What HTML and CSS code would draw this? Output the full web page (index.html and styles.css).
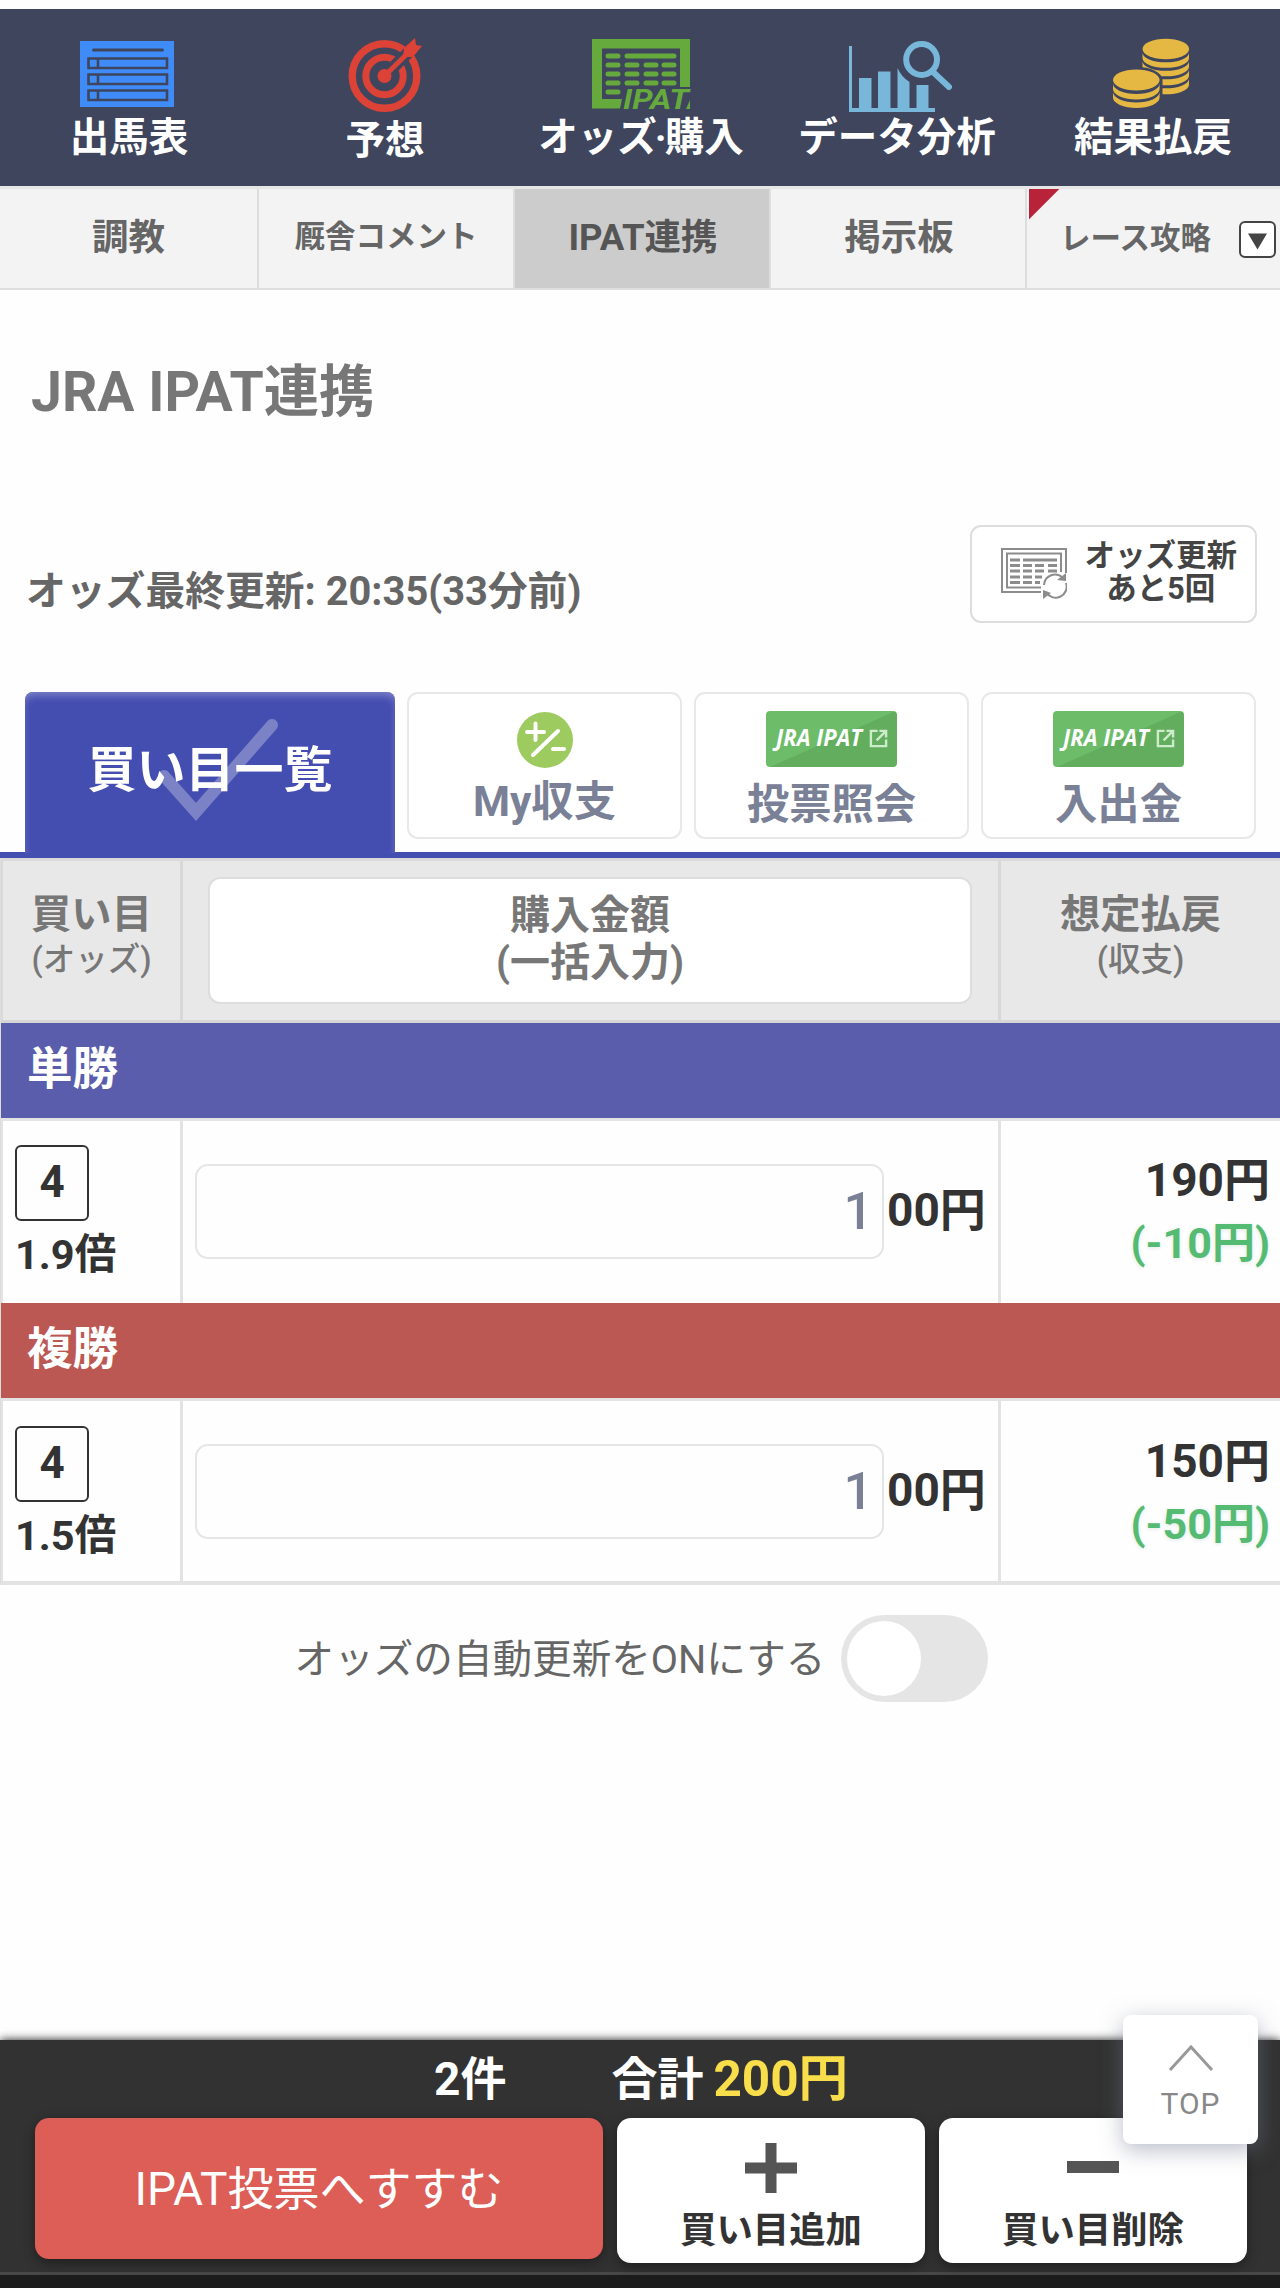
FILE: index.html
```html
<!DOCTYPE html>
<html lang="ja">
<head>
  <meta charset="utf-8">
  <title>JRA IPAT連携</title>
  <link rel="stylesheet" href="styles.css">
</head>
<body>
  <div class="page">
    <nav class="main-nav">
      <a class="main-nav-item">
        <svg class="nav-icon" viewBox="0 0 104 78">
          <rect x="4" y="5" width="94" height="66" fill="#3f8cf8"/>
          <g fill="none" stroke="#3e455d" stroke-width="2.6">
            <path d="M17.500 14H86.500" stroke-width="3" stroke-linecap="round"/>
            <path d="M12.500 22.500h78.500v9.500h-78.500zM22 22.500v9.500"/>
            <path d="M12.500 38.500h78.500v9.500h-78.500zM22 38.500v9.500"/>
            <path d="M12.500 54.500h78.500v9.500h-78.500zM22 54.500v9.500"/>
          </g>
        </svg>
        <span>出馬表</span>
      </a>
      <a class="main-nav-item low">
        <svg class="nav-icon" viewBox="0 0 104 78">
          <g fill="none" stroke="#dc4236">
            <circle cx="52.500" cy="40" r="32.300" stroke-width="7.400"/>
            <circle cx="52.500" cy="40" r="18.700" stroke-width="7"/>
            <path d="M52.500 40L90 3" stroke="#3e455d" stroke-width="12"/>
            <path d="M52.500 40L80 13" stroke-width="5"/>
          </g>
          <circle cx="52.500" cy="40" r="7" fill="#dc4236"/>
          <path d="M71 21l1-9 11-10 1 7 6 1-9 11z" fill="#dc4236"/>
        </svg>
        <span>予想</span>
      </a>
      <a class="main-nav-item">
        <svg class="nav-icon" viewBox="0 0 104 78">
          <path d="M4 3H102V51H92V12.500H14V63H34L32 72.500H4z" fill="#66aa3d"/>
          <g stroke="#66aa3d" stroke-width="5" stroke-linecap="round">
            <path d="M20 20H30M39 20H86"/>
            <path d="M20 29H30M39 29H49M58 29H68M76 29H86"/>
            <path d="M20 38H30M39 38H49M58 38H68M76 38H86"/>
            <path d="M20 47H30M39 47H49M58 47H68M76 47H86"/>
            <path d="M20 56H30"/>
          </g>
          <text class="ipat-text" x="35" y="73" textLength="66" lengthAdjust="spacingAndGlyphs">IPAT</text>
          <path d="M98 73l4-9v9z" fill="#66aa3d"/>
        </svg>
        <span>オッズ<i class="dot">·</i>購入</span>
      </a>
      <a class="main-nav-item">
        <svg class="nav-icon" viewBox="0 0 104 78">
          <g fill="#78b6da">
            <path d="M5 10h3v62h83v4H5z"/>
            <path d="M15 42h12.500v30H15zM34 35.500h12.500V72H34zM53.500 32q4 9 12 14v26h-12zM72.500 49h12v23h-12z"/>
          </g>
          <circle cx="77.600" cy="23.500" r="15.400" fill="none" stroke="#78b6da" stroke-width="6"/>
          <path d="M88 35L105 51" stroke="#78b6da" stroke-width="6" stroke-linecap="round"/>
        </svg>
        <span>データ分析</span>
      </a>
      <a class="main-nav-item">
        <svg class="nav-icon" viewBox="0 0 104 78">
          <g fill="#e5b843">
            <ellipse cx="65.800" cy="13" rx="23.300" ry="10.200"/>
            <path d="M42.500 17A23.300 10 0 0 0 89 17v5.500A23.300 10 0 0 1 42.500 22.500z"/>
            <path d="M42.500 25.500A23.300 10 0 0 0 89 25.500V31A23.300 10 0 0 1 42.500 31z"/>
            <path d="M42.500 34A23.300 10 0 0 0 89 34v6A23.300 10 0 0 1 42.500 40z"/>
            <path d="M42.500 43A23.300 10 0 0 0 89 43v6A23.300 10 0 0 1 42.500 49z"/>
            <path d="M10 44a26 13 0 0 1 52.500 0v18q-26 20-52.500 0z" fill="#3e455d"/>
            <ellipse cx="36.300" cy="44" rx="23.300" ry="10.500"/>
            <path d="M13 47.500A23.300 10.500 0 0 0 59.600 47.500v5.500A23.300 10.500 0 0 1 13 53z"/>
            <path d="M13 56A23.300 10.500 0 0 0 59.600 56v5.500A23.300 10.500 0 0 1 13 61.500z"/>
          </g>
        </svg>
        <span>結果払戻</span>
      </a>
    </nav>

    <nav class="sub-nav">
      <a class="sub-nav-item">調教</a>
      <a class="sub-nav-item small">厩舎コメント</a>
      <a class="sub-nav-item current">IPAT連携</a>
      <a class="sub-nav-item">掲示板</a>
      <a class="sub-nav-item small last">レース攻略
        <svg class="dropdown" viewBox="0 0 37 37">
          <rect x="1" y="1" width="35" height="35" rx="5" fill="#fff" stroke="#444" stroke-width="2"/>
          <path d="M9 12.500h19l-9.500 16z" fill="#444"/>
        </svg>
      </a>
    </nav>

    <h1 class="title">JRA IPAT連携</h1>

    <div class="odds-update">
      <p class="odds-time">オッズ最終更新: 20:35(33分前)</p>
      <button class="update-btn">
        <svg class="update-icon" viewBox="0 0 66 52">
          <g fill="none" stroke="#8c8c8c" stroke-width="2">
            <path d="M40 44H1V1H65V25"/>
            <path d="M40 39.500H6V5.500H60V24"/>
          </g>
          <g stroke="#8c8c8c" stroke-width="2.800">
            <path d="M9 12H19M22 12H56"/>
            <path d="M9 17.500H19M22 17.500H31M34 17.500H43M47 17.500H56"/>
            <path d="M9 23H19M22 23H31M34 23H43M47 23H56"/>
            <path d="M9 29H19M22 29H31M34 29H41"/>
            <path d="M9 34.500H19M22 34.500H31M34 34.500H39"/>
          </g>
          <g fill="none" stroke="#8c8c8c" stroke-width="2">
            <path d="M43 37a11 11 0 0 1 19-7"/>
            <path d="M65 35a11 11 0 0 1-20 9"/>
          </g>
          <path d="M65 25v8l-9-1zM42 51v-9l8 3z" fill="#8c8c8c"/>
        </svg>
        <span>オッズ更新<br>あと5回</span>
      </button>
    </div>

    <div class="tabs">
      <a class="tab active">
        <svg class="check" viewBox="0 0 122 108"><path d="M7 58L39 94 115 7" fill="none" stroke="#7b82c6" stroke-width="12" stroke-linecap="round"/></svg>
        <span class="tab-active-label">買い目一覧</span>
      </a>
      <a class="tab">
        <svg class="balance-icon" viewBox="0 0 56 56">
          <circle cx="28" cy="28" r="28" fill="#9ecb60"/>
          <path d="M10 20H27M18.500 11.500V28M36 37H47M16 43L41 19" fill="none" stroke="#fff" stroke-width="4" stroke-linecap="round"/>
        </svg>
        <span>My収支</span>
      </a>
      <a class="tab">
        <div class="ipat-badge">
          <svg class="badge-text" viewBox="0 0 90 36"><text x="1" y="26" textLength="86" lengthAdjust="spacingAndGlyphs">JRA IPAT</text></svg>
          <svg class="ext-icon" viewBox="0 0 20 20"><path d="M9 2H2v16h16v-7M11 2h7v7M18 2L8 12" fill="none" stroke="#cdeccb" stroke-width="2.500"/></svg>
        </div>
        <span>投票照会</span>
      </a>
      <a class="tab">
        <div class="ipat-badge">
          <svg class="badge-text" viewBox="0 0 90 36"><text x="1" y="26" textLength="86" lengthAdjust="spacingAndGlyphs">JRA IPAT</text></svg>
          <svg class="ext-icon" viewBox="0 0 20 20"><path d="M9 2H2v16h16v-7M11 2h7v7M18 2L8 12" fill="none" stroke="#cdeccb" stroke-width="2.500"/></svg>
        </div>
        <span>入出金</span>
      </a>
    </div>

    <div class="bet-table">
      <div class="bet-row bet-head">
        <div class="col-bet">買い目<small>(オッズ)</small></div>
        <div class="col-money"><button class="bulk-btn">購入金額<br>(一括入力)</button></div>
        <div class="col-return">想定払戻<small>(収支)</small></div>
      </div>
      <div class="bet-type win">単勝</div>
      <div class="bet-row">
        <div class="col-bet">
          <span class="umaban">4</span>
          <span class="odds">1.9倍</span>
        </div>
        <div class="col-money">
          <input class="money" type="text" value="1">
          <span class="unit">00円</span>
        </div>
        <div class="col-return">
          <span class="payout">190円</span>
          <span class="balance">(-10円)</span>
        </div>
      </div>
      <div class="bet-type place">複勝</div>
      <div class="bet-row">
        <div class="col-bet">
          <span class="umaban">4</span>
          <span class="odds">1.5倍</span>
        </div>
        <div class="col-money">
          <input class="money" type="text" value="1">
          <span class="unit">00円</span>
        </div>
        <div class="col-return">
          <span class="payout">150円</span>
          <span class="balance">(-50円)</span>
        </div>
      </div>
    </div>

    <div class="auto-update">
      <span class="auto-label">オッズの自動更新をONにする</span>
      <span class="switch"></span>
    </div>

    <footer class="footer">
      <div class="total">
        <span class="count">2件</span>
        <span class="sum-label">合計</span>
        <span class="sum">200円</span>
      </div>
      <div class="footer-btns">
        <button class="btn-vote">IPAT投票へすすむ</button>
        <button class="btn-edit">
          <svg class="sign" viewBox="0 0 52 52"><path d="M0 26H52M26 1V51" stroke="#555" stroke-width="11"/></svg>
          買い目追加
        </button>
        <button class="btn-edit">
          <svg class="sign" viewBox="0 0 52 52"><path d="M0 25H52" stroke="#555" stroke-width="12"/></svg>
          買い目削除
        </button>
      </div>
      <div class="bottom-bar"></div>
      <a class="page-top">
        <svg class="chevron" viewBox="0 0 46 28"><path d="M2 26L23 3 44 26" fill="none" stroke="#999" stroke-width="3"/></svg>
        TOP
      </a>
    </footer>
  </div>
</body>
</html>
```
FILE: styles.css
```css
* {
  box-sizing: border-box;
}
body {
  margin: 0;
  background: #fefefe;
  color: #333;
  font-family: Roboto, "Noto Sans CJK JP", sans-serif;
  font-weight: bold;
}
button, input {
  font: inherit;
  margin: 0;
  padding: 0;
}
.page {
  width: 1280px;
  height: 2288px;
  padding-top: 9px;
  overflow: hidden;
  display: flex;
  flex-direction: column;
}

/* header */
.main-nav {
  display: flex;
  height: 177px;
  background: #3e455d;
}
.main-nav-item {
  width: 256px;
  padding-top: 27px;
  display: flex;
  flex-direction: column;
  align-items: center;
  color: #fff;
  font-size: 39.5px;
  line-height: 40px;
  white-space: nowrap;
}
.main-nav-item span {
  margin: 4px 0 0 2px;
}
.main-nav-item.low span {
  margin-top: 7px;
}
.nav-icon {
  width: 104px;
  height: 78px;
  flex: none;
  overflow: visible;
}
.ipat-text {
  font: italic bold 28px Roboto, sans-serif;
  fill: #66aa3d;
}
.dot {
  margin: 0 -2px;
  font-style: normal;
}
.sub-nav {
  display: flex;
  height: 104px;
  border-top: 3px solid #e6e6e6;
  border-bottom: 2px solid #ddd;
  background: #f3f3f3;
  color: #666;
}
.sub-nav-item {
  width: 256px;
  padding-left: 2px;
  border-right: 2px solid #ddd;
  font-size: 36.5px;
  line-height: 98px;
  text-align: center;
}
.sub-nav-item:first-child {
  width: 259px;
  padding: 0;
}
.sub-nav-item.small {
  padding: 0;
  font-size: 30.5px;
  line-height: 96px;
}
.sub-nav-item.current {
  background: #ccc;
  color: #555;
}
.sub-nav-item.small.last {
  flex: 1;
  border: 0;
  display: flex;
  align-items: center;
  justify-content: flex-end;
  gap: 28px;
  padding-right: 4px;
  background: linear-gradient(135deg, #b92339 0, #b92339 21px, transparent 22px) 2px 0 no-repeat;
}
.dropdown {
  width: 37px;
  height: 37px;
  margin-top: 1px;
}

/* title */
.title {
  margin: 70px 0 0 31px;
  color: #777;
  font-size: 55.3px;
  line-height: 66px;
}
.odds-update {
  display: flex;
  justify-content: space-between;
  align-items: center;
  height: 98px;
  margin: 99px 23px 0 26px;
}
.odds-time {
  margin: 35px 0 0;
  color: #666;
  font-size: 39.8px;
  line-height: 44px;
}
.update-btn {
  width: 287px;
  height: 98px;
  padding: 0 18px 5px 29px;
  display: flex;
  align-items: center;
  justify-content: space-between;
  border: 2px solid #ddd;
  border-radius: 11px;
  background: #fff;
  color: #444;
  font-size: 30.5px;
  line-height: 33px;
}
.update-icon {
  width: 66px;
  height: 52px;
  margin-top: 4px;
}

/* tabs */
.tabs {
  display: flex;
  gap: 12px;
  height: 166px;
  margin-top: 69px;
  padding-left: 25px;
  border-bottom: 6px solid #444db0;
}
.tab {
  width: 275px;
  height: 147px;
  display: flex;
  flex-direction: column;
  align-items: center;
  border: 2px solid #e8e8e8;
  border-radius: 11px;
  background: #fff;
  color: #7a8096;
  font-size: 42.3px;
  line-height: 46px;
}
.tab.active {
  width: 370px;
  height: 161px;
  position: relative;
  border: 0;
  border-radius: 8px 8px 0 0;
  background: #444db0;
  box-shadow: inset 0 5px 8px -2px #8087c8;
  color: #fff;
  font-size: 49px;
}
.tab-active-label {
  position: relative;
  margin-top: 56px;
}
.check {
  position: absolute;
  left: 132px;
  top: 26px;
  width: 122px;
  height: 108px;
}
.balance-icon {
  width: 56px;
  height: 56px;
  margin: 18px 0 11px;
}
.ipat-badge {
  width: 131px;
  height: 56px;
  margin: 17px 0 15px;
  display: flex;
  align-items: center;
  justify-content: center;
  gap: 4px;
  border-radius: 4px;
  background: linear-gradient(156deg, #6dbc6a 50%, #62ae5e 51%);
}
.badge-text {
  width: 90px;
  height: 36px;
  margin-bottom: 2px;
  overflow: visible;
  fill: #fff;
  font: italic bold 24px "Open Sans", sans-serif;
}
.ext-icon {
  width: 19px;
  height: 19px;
  margin-bottom: 2px;
}

/* bet list */
.bet-table {
  border-left: 1px solid #ddd;
}
.bet-row {
  display: flex;
  height: 185px;
  border-top: 3px solid #e3e3e3;
  border-left: 2px solid #e3e3e3;
}
.bet-row:last-child {
  height: 187px;
  border-bottom: 4px solid #e3e3e3;
}
.bet-head {
  height: 165px;
  background: #e8e8e8;
  border-color: #dadada;
  border-bottom: 3px solid #d6d6d6;
  color: #777;
  font-size: 40.3px;
  line-height: 46px;
}
.bet-head small {
  display: block;
  font-size: 32.5px;
  font-weight: 500;
  line-height: 44px;
}
.col-bet {
  width: 180px;
  border-right: 3px solid #e3e3e3;
  padding: 24px 0 0 12px;
}
.col-money {
  width: 818px;
  border-right: 3px solid #e3e3e3;
  display: flex;
  align-items: center;
  padding: 0 0 2px 12px;
}
.col-return {
  flex: 1;
  padding: 31px 10px 0 0;
  text-align: right;
}
.bet-row:last-child .col-bet {
  padding-top: 25px;
}
.bet-row:last-child .col-money {
  padding-bottom: 0;
}
.bet-row:last-child .col-return {
  padding-top: 32px;
}
.bet-head .col-bet,
.bet-head .col-return {
  padding: 31px 0 0;
  border-color: #d8d8d8;
  text-align: center;
}
.bet-head .col-money {
  padding: 0 0 0 25px;
  border-color: #d8d8d8;
}
.bulk-btn {
  width: 764px;
  height: 127px;
  padding-bottom: 3px;
  border: 2px solid #ddd;
  border-radius: 12px;
  background: #fff;
  color: #777;
  font-size: 40px;
  line-height: 47px;
}
.bet-type {
  height: 95px;
  padding-left: 26px;
  color: #fff;
  font-size: 45.5px;
  line-height: 94px;
}
.win {
  background: #595dac;
}
.place {
  background: #bc5854;
}
.umaban {
  display: block;
  width: 74px;
  height: 76px;
  border: 2px solid #333;
  border-radius: 6px;
  font-size: 44px;
  line-height: 70px;
  text-align: center;
}
.odds {
  display: block;
  margin-top: 9px;
  font-size: 41.5px;
  line-height: 50px;
}
.money {
  width: 689px;
  height: 95px;
  padding-right: 9px;
  border: 2px solid #e5e5e5;
  border-radius: 13px;
  background: #fefefe;
  color: #7a8096;
  font-size: 52px;
  font-weight: 500;
  text-align: right;
}
.unit {
  margin: 0 0 2px 3px;
  font-size: 46px;
  line-height: 60px;
}
.payout {
  display: block;
  font-size: 46px;
  line-height: 56px;
}
.balance {
  display: block;
  color: #55bb72;
  font-size: 43px;
  line-height: 70px;
  text-shadow: 0 1px 4px #dde9e4;
}

.auto-update {
  display: flex;
  align-items: center;
  justify-content: center;
  gap: 16px;
  margin-top: 30px;
  padding-left: 3px;
  color: #666;
  font-size: 39.6px;
  font-weight: normal;
}
.auto-label {
  margin-bottom: 6px;
}
.switch {
  width: 147px;
  height: 87px;
  padding: 6px;
  border-radius: 44px;
  background: #e5e5e5;
}
.switch::before {
  content: "";
  display: block;
  width: 74px;
  height: 75px;
  border-radius: 50%;
  background: #fff;
}

/* fixed footer */
.footer {
  position: relative;
  height: 248px;
  margin-top: auto;
  background: #323232;
  box-shadow: 0 0 9px rgba(0, 0, 0, 0.9);
}
.total {
  display: flex;
  align-items: center;
  height: 78px;
  padding: 0 0 0 434px;
  color: #fff;
  font-size: 46px;
  line-height: 78px;
}
.sum-label {
  margin-left: 105px;
}
.sum {
  margin-left: 10px;
  color: #f8de4a;
  font-size: 49.5px;
}
.footer-btns {
  display: flex;
  gap: 14px;
  height: 154px;
  padding-left: 35px;
}
.btn-vote {
  width: 568px;
  height: 141px;
  padding-bottom: 7px;
  border: 0;
  border-radius: 14px;
  background: #dd5d57;
  box-shadow: 0 4px 12px rgba(0, 0, 0, 0.4);
  color: #fff;
  font-size: 46px;
  font-weight: normal;
}
.btn-edit {
  width: 308px;
  height: 145px;
  display: flex;
  flex-direction: column;
  align-items: center;
  padding-top: 24px;
  border: 0;
  border-radius: 14px;
  background: #fff;
  box-shadow: 0 4px 12px rgba(0, 0, 0, 0.4);
  color: #333;
  font-size: 36.4px;
  line-height: 40px;
}
.sign {
  width: 52px;
  height: 52px;
  margin-bottom: 17px;
}
.bottom-bar {
  height: 16px;
  border-top: 3px solid #484848;
  background: #1c1c1c;
}
.page-top {
  position: absolute;
  top: -25px;
  left: 1123px;
  width: 135px;
  height: 129px;
  padding-top: 29px;
  display: flex;
  flex-direction: column;
  align-items: center;
  border-radius: 8px;
  background: #fff;
  box-shadow: 0 6px 22px rgba(120, 125, 150, 0.5);
  color: #888;
  font-size: 30px;
  font-weight: normal;
  letter-spacing: 1px;
  line-height: 40px;
}
.chevron {
  width: 46px;
  height: 28px;
  margin-bottom: 12px;
}
```
